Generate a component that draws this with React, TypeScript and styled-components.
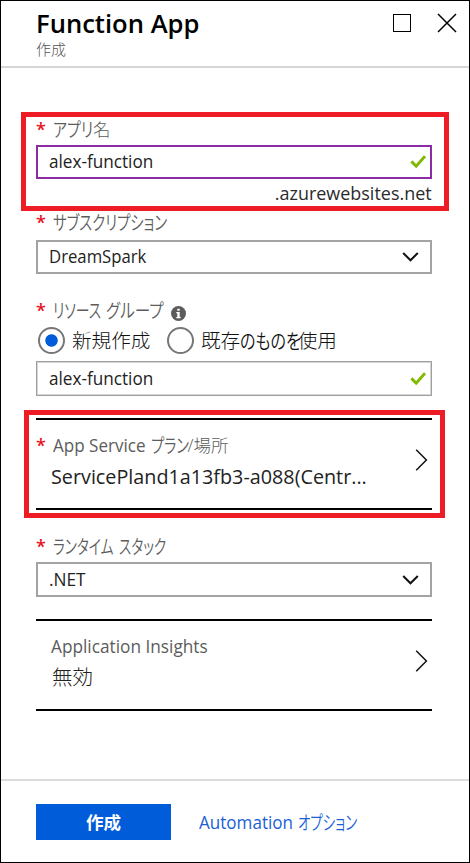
import React from "react";
import styled, { createGlobalStyle } from "styled-components";

const Global = createGlobalStyle`
  *, *::before, *::after { box-sizing: border-box; }
  body {
    margin: 0;
    background: #fff;
    font-family: "Open Sans", "Noto Sans CJK JP", sans-serif;
    font-weight: 400;
  }
`;

const Blade = styled.main`
  display: flex;
  flex-direction: column;
  width: 470px;
  height: 863px;
  border: 1px solid #000;
  background: #fff;
  overflow: hidden;
`;

const Header = styled.header`
  display: flex;
  justify-content: space-between;
  flex: none;
  height: 67px;
  padding: 7px 12px 0 35px;
  border-bottom: 2px solid #d6d6d6;
`;

const Text = styled.span<{ $sx?: number; $end?: boolean }>`
  display: inline-block;
  white-space: pre;
  transform: scaleX(${(p) => p.$sx ?? 1});
  transform-origin: ${(p) => (p.$end ? "right" : "left")} center;
`;

/* Narrow kana: glyphs are condensed and the box takes the condensed width. */
const KanaBox = styled.span<{ $w: number }>`
  display: inline-block;
  flex: none;
  width: ${(p) => p.$w}px;
  white-space: pre;
`;

const KanaGlyphs = styled.span<{ $size: number; $sx: number }>`
  display: inline-block;
  font-family: "Noto Sans CJK JP", sans-serif;
  font-size: ${(p) => p.$size}px;
  font-weight: 350;
  font-feature-settings: "palt";
  transform: scaleX(${(p) => p.$sx});
  transform-origin: left center;
`;

const Kana = ({ children, width, size = 19.5, sx = 0.75 }: { children: string; width: number; size?: number; sx?: number }) => (
  <KanaBox $w={width}>
    <KanaGlyphs $size={size} $sx={sx}>{children}</KanaGlyphs>
  </KanaBox>
);

const Thin = styled.span`
  font-family: "Open Sans", "Noto Sans CJK JP", sans-serif;
  font-weight: 300;
`;

const Gap = styled.span<{ $w: number }>`
  display: inline-block;
  flex: none;
  width: ${(p) => p.$w}px;
`;

const Title = styled.h1`
  margin: 1px 0 0;
  font-size: 25.6px;
  font-weight: 600;
  line-height: 30px;
  height: 30px;
  color: #000;
`;

const Subtitle = styled.div`
  font-size: 15px;
  line-height: 20px;
  height: 20px;
  color: #555;
  font-weight: 300;
`;

const WindowActions = styled.div`
  display: flex;
  gap: 25px;
  padding-top: 5px;
`;

const IconButton = styled.button`
  display: block;
  width: 20px;
  height: 20px;
  padding: 0;
  border: 0;
  background: none;
`;

const Body = styled.section`
  flex: 1;
  padding: 44px 37px 0 35px;
`;

const Callout = styled.div<{ $h: number; $left: number; $right: number; $padding: string; $mt?: number }>`
  height: ${(p) => p.$h}px;
  margin: ${(p) => p.$mt ?? 0}px ${(p) => -p.$right}px 0 ${(p) => -p.$left}px;
  padding: ${(p) => p.$padding};
  border: 5px solid #ee1c25;
`;

const Label = styled.div<{ $mt?: number; $mb?: number; $lh?: number }>`
  display: flex;
  height: ${(p) => p.$lh ?? 22}px;
  line-height: ${(p) => p.$lh ?? 22}px;
  margin: ${(p) => p.$mt ?? 0}px 0 ${(p) => p.$mb ?? 0}px;
  font-size: 17.5px;
  color: #5c5c5c;
  white-space: pre;
`;

const Star = styled.span`
  flex: none;
  width: 16.5px;
  font-size: 18px;
  font-weight: 600;
  color: #e81123;
`;

const Field = styled.div<{ $h: number; $border: string; $thin?: boolean }>`
  display: flex;
  align-items: center;
  justify-content: space-between;
  height: ${(p) => p.$h}px;
  padding: 0 ${(p) => (p.$thin ? 5 : 4)}px 0 ${(p) => (p.$thin ? 12.4 : 11.4)}px;
  border: ${(p) => (p.$thin ? 1 : 2)}px solid ${(p) => p.$border};
  box-shadow: ${(p) => (p.$thin ? "inset 0 0 0 1px #d4d4d4" : "none")};
  font-size: 17.5px;
  line-height: 24px;
  color: #222;
`;

const FieldText = styled.div`
  height: 26px;
  line-height: 24px;
`;

const Suffix = styled.div`
  height: 27px;
  line-height: 27px;
  text-align: right;
  font-size: 18.5px;
  color: #2a2a2a;
`;

const Info = styled.span`
  margin: 7px 0 0 7.5px;
  height: 15px;
  line-height: 0;
`;

const RadioRow = styled.div`
  display: flex;
  height: 27px;
  margin: 6px 0 7px;
  padding-left: 2px;
`;

const Option = styled.label<{ $w: number }>`
  display: flex;
  align-items: center;
  width: ${(p) => p.$w}px;
  font-size: 19.6px;
  font-weight: 300;
  line-height: 27px;
  color: #111;
  white-space: nowrap;
`;

const Radio = styled.span<{ $on?: boolean }>`
  flex: none;
  width: 27px;
  height: 27px;
  margin-right: 7px;
  border: 2px solid #777;
  border-radius: 50%;
  background: ${(p) =>
    p.$on ? "radial-gradient(circle at 11.5px 11.5px, #015cda 5.8px, #fff 6.6px)" : "#fff"};
`;

const PickerRow = styled.div<{ $mt?: number }>`
  display: flex;
  align-items: flex-start;
  justify-content: space-between;
  height: 92px;
  margin-top: ${(p) => p.$mt ?? 0}px;
  padding-right: 4px;
  border-top: 2px solid #000;
  border-bottom: 2px solid #000;
`;

const PickerText = styled.div`
  padding-top: 13px;
`;

const PickerValue = styled.div<{ $cjk?: boolean }>`
  height: 28px;
  margin: ${(p) => (p.$cjk ? 5 : 6)}px 0 0 ${(p) => (p.$cjk ? 16 : 15)}px;
  line-height: 28px;
  font-size: ${(p) => (p.$cjk ? 20.5 : 20)}px;
  font-weight: ${(p) => (p.$cjk ? 300 : 400)};
  color: #222;
`;

const Arrow = styled.svg`
  display: block;
  margin-top: 28.5px;
`;

const Footer = styled.footer`
  display: flex;
  align-items: flex-start;
  gap: 28px;
  flex: none;
  height: 83px;
  padding: 23px 35px 0;
  border-top: 2px solid #dcdcdc;
`;

const Create = styled.button`
  width: 135px;
  height: 36px;
  padding: 0;
  border: 0;
  background: #015cda;
  color: #fff;
  font: 700 17.5px/36px "Open Sans", "Noto Sans CJK JP", sans-serif;
`;

const Link = styled.a`
  display: flex;
  height: 36px;
  line-height: 36px;
  font-size: 17.5px;
  color: #1b5fd6;
  white-space: pre;
`;

const LinkWord = styled.span`
  width: 99px;
`;

const LabelWord = styled.span`
  width: 98px;
`;

const Check = () => (
  <svg width="16" height="14" viewBox="0 0 16 14" fill="none" stroke="#7fba00" strokeWidth="2.9">
    <path d="M1.4 6.4 L6.2 11.2 L15 1.2" />
  </svg>
);

const Down = () => (
  <svg width="24" height="12" viewBox="0 0 24 12" fill="none" stroke="#111" strokeWidth="2">
    <path d="M1.2 2 L8.5 9.3 L15.8 2" />
  </svg>
);

const Right = () => (
  <Arrow width="13" height="22" viewBox="0 0 13 22" fill="none" stroke="#111" strokeWidth="1.5">
    <path d="M1.2 0.8 L11.4 11 L1.2 21.2" />
  </Arrow>
);

export default function App() {
  return (
    <>
      <Global />
      <Blade>
        <Header>
          <div>
            <Title>Function App</Title>
            <Subtitle>作成</Subtitle>
          </div>
          <WindowActions>
            <IconButton aria-label="最大化">
              <svg width="20" height="20" viewBox="0 0 20 20" fill="none" stroke="#000">
                <rect x="1.5" y="1.5" width="17" height="17" />
              </svg>
            </IconButton>
            <IconButton aria-label="閉じる">
              <svg width="20" height="20" viewBox="0 0 20 20" stroke="#000" strokeWidth="1.5">
                <path d="M1 1 L19 19 M19 1 L1 19" />
              </svg>
            </IconButton>
          </WindowActions>
        </Header>

        <Body>
          <Callout $h={99} $left={15} $right={17} $padding="0 12px 0 10px">
            <Label $lh={24} $mb={4}><Star>*</Star><Kana width={40.5} sx={0.77}>アプリ</Kana><Thin>名</Thin></Label>
            <Field $h={34} $border="#892ca6">
              <FieldText><Text $sx={0.98}>alex-function</Text></FieldText>
              <Check />
            </Field>
            <Suffix><Text $sx={0.97} $end>.azurewebsites.net</Text></Suffix>
          </Callout>

          <Label $mb={7}><Star>*</Star><Kana width={115} sx={0.74}>サブスクリプション</Kana></Label>
          <Field $h={34} $border="#a3a3a3">
            <FieldText><Text $sx={0.955}>DreamSpark</Text></FieldText>
            <Down />
          </Field>

          <Label $mt={25}>
            <Star>*</Star>
            <Kana width={53} sx={0.71}>リソース</Kana>
            <Kana width={58} sx={0.8}>グループ</Kana>
            <Info>
              <svg width="15" height="15" viewBox="0 0 15 15">
                <circle cx="7.5" cy="7.5" r="7.5" fill="#5c5c5c" />
                <path d="M6.3 2.7h2.4v2H6.3z M5.3 6h3.4v5h1v1.2H5.3V11h1V7.2h-1z" fill="#fff" />
              </svg>
            </Info>
          </Label>
          <RadioRow>
            <Option $w={129}><Radio $on />新規作成</Option>
            <Option $w={200}>
              <Radio />
              既存<Kana size={20} width={57.5} sx={0.8}>のものを</Kana>使用
            </Option>
          </RadioRow>
          <Field $h={35} $border="#a0a0a0" $thin>
            <FieldText><Text $sx={0.98}>alex-function</Text></FieldText>
            <Check />
          </Field>

          <Callout $h={108} $left={12} $right={13} $padding="3px 8px 0 7px" $mt={14}>
            <PickerRow>
              <PickerText>
                <Label $lh={24}>
                  <Star>*</Star>
                  <LabelWord><Text $sx={0.975}>App Service</Text></LabelWord>
                  <Kana width={37} sx={0.73}>プラン</Kana><Thin>/場所</Thin>
                </Label>
                <PickerValue><Text $sx={0.988}>ServicePland1a13fb3-a088(Centr...</Text></PickerValue>
              </PickerText>
              <Right />
            </PickerRow>
          </Callout>

          <Label $mt={17} $mb={5}>
            <Star>*</Star>
            <Kana width={66} sx={0.7}>ランタイム</Kana>
            <Kana width={50} sx={0.7}>スタック</Kana>
          </Label>
          <Field $h={35} $border="#a3a3a3">
            <FieldText><Text $sx={0.985}>.NET</Text></FieldText>
            <Down />
          </Field>

          <PickerRow $mt={22}>
            <PickerText>
              <Label $lh={24}><Gap $w={15} /><Text $sx={0.985}>Application Insights</Text></Label>
              <PickerValue $cjk>無効</PickerValue>
            </PickerText>
            <Right />
          </PickerRow>
        </Body>

        <Footer>
          <Create>作成</Create>
          <Link><LinkWord><Text $sx={0.975}>Automation</Text></LinkWord><Kana width={58} sx={0.69}>オプション</Kana></Link>
        </Footer>
      </Blade>
    </>
  );
}
